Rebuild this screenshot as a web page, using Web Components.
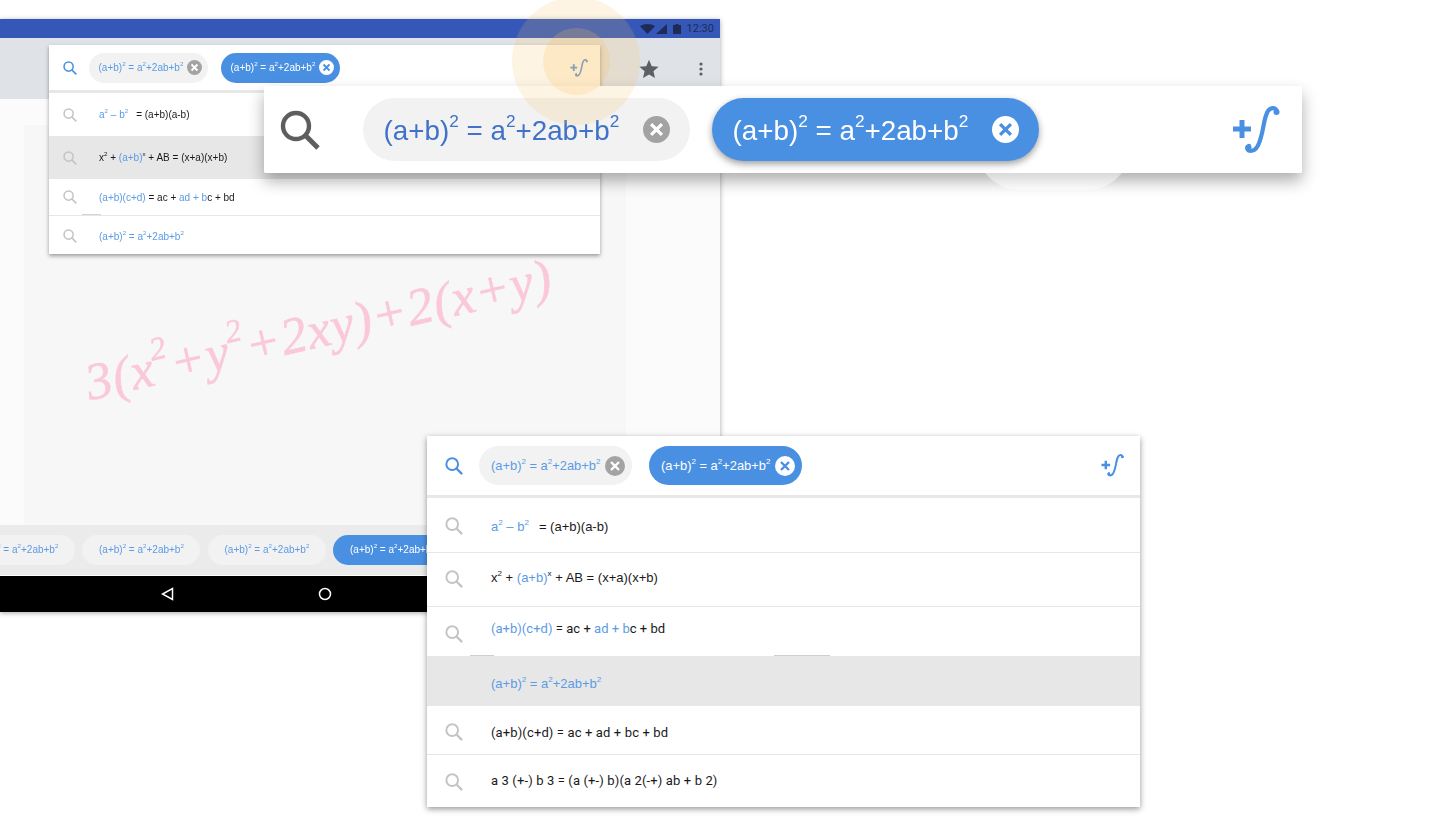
<!DOCTYPE html>
<html lang="en">
<head>
<meta charset="utf-8">
<title>Math search</title>
<style>
    html, body { margin: 0; height: 100%; background: #fff; overflow: hidden; }
    body { font-family: "Liberation Sans", Arial, sans-serif; color: #1a1a1a; }

    sup { font-size: .62em; vertical-align: .76em; line-height: 0; }
    .hl { color: var(--hl, #5b9be6); }
    .roboto { font-family: Roboto, sans-serif; letter-spacing: .13px; }

    /* the three scales of the same search field */
    .size-s {
        --field-h: 45px; --field-pad-l: 14px; --field-pad-r: 12px; --field-gap: 12px; --chip-gap: 13px;
        --icon-size: 14px; --integral-w: 18px; --integral-h: 20px;
        --chip-w: 119px; --chip-h: 30px; --chip-font: 10px; --chip-pad-l: 9.500px; --chip-pad-r: 6px; --clear-size: 15px;
    }
    .size-m {
        --field-h: 59px; --field-pad-l: 18px; --field-pad-r: 16px; --field-gap: 16px; --chip-gap: 17px;
        --icon-size: 18px; --integral-w: 23px; --integral-h: 25px; --chip-text-shift: 1px;
        --chip-w: 153px; --chip-h: 39px; --chip-font: 12.900px; --chip-pad-l: 12px; --chip-pad-r: 7px; --clear-size: 20px;
    }
    .size-l {
        --field-h: 87px; --field-pad-l: 16px; --field-pad-r: 22px; --field-gap: 43px; --chip-gap: 22px;
        --icon-size: 40px; --integral-w: 48px; --integral-h: 50px; --chip-text-shift: 1px;
        --chip-w: 327px; --chip-h: 63px; --chip-font: 27.800px; --chip-pad-l: 20.500px; --chip-pad-r: 20px; --clear-size: 27px;
        --chip-ink: #3f72c8; --search-ink: #5e5e5e; --chip-shadow: 0 3px 7px rgba(0,0,0,.38);
    }
</style>
</head>
<body>

<desktop-canvas>

    <tablet-screen>
        <math-chip slot="tray" plain>(a+b)<sup>2</sup> = a<sup>2</sup>+2ab+b<sup>2</sup></math-chip>
        <math-chip slot="tray" plain>(a+b)<sup>2</sup> = a<sup>2</sup>+2ab+b<sup>2</sup></math-chip>
        <math-chip slot="tray" plain>(a+b)<sup>2</sup> = a<sup>2</sup>+2ab+b<sup>2</sup></math-chip>
        <math-chip slot="tray" plain selected>(a+b)<sup>2</sup> = a<sup>2</sup>+2ab+b<sup>2</sup></math-chip>

        <search-card slot="overlay" class="size-s" style="--card-w: 551px; --row-pad: 14px; --row-gap: 22px; --row-font: 10px; --card-shadow: 0 2px 4px rgba(0,0,0,.38); --divider: 3px">
            <search-field>
                <math-chip>(a+b)<sup>2</sup> = a<sup>2</sup>+2ab+b<sup>2</sup></math-chip>
                <math-chip selected>(a+b)<sup>2</sup> = a<sup>2</sup>+2ab+b<sup>2</sup></math-chip>
            </search-field>
            <suggest-row style="--row-h: 43px"><span class="hl">a<sup>2</sup> – b<sup>2</sup></span><span style="margin-left: 8px">= (a+b)(a-b)</span></suggest-row>
            <suggest-row active style="--row-h: 43px">x<sup>2</sup> + <span class="hl">(a+b)</span><sup>x</sup> + AB = (x+a)(x+b)</suggest-row>
            <suggest-row style="--row-h: 37px; --row-line: 1px; --row-bg: linear-gradient(#d4d4d4, #d4d4d4) 33px 100% / 19px 1px no-repeat #fff">
                <span class="hl">(a+b)(c+d)</span> = ac + <span class="hl">ad + b</span>c + bd
            </suggest-row>
            <suggest-row style="--row-h: 38px; --text-shift: 1px; --icon-shift: 1px"><span class="hl">(a+b)<sup>2</sup> = a<sup>2</sup>+2ab+b<sup>2</sup></span></suggest-row>
        </search-card>

        <ink-note slot="overlay">3(x<sup>2</sup>+y<sup>2</sup>+2xy)+2(x+y)</ink-note>
    </tablet-screen>

    <hero-bar class="size-l" style="--hl: #3f72c8">
        <math-chip>(a+b)<sup>2</sup> = a<sup>2</sup>+2ab+b<sup>2</sup></math-chip>
        <math-chip selected>(a+b)<sup>2</sup> = a<sup>2</sup>+2ab+b<sup>2</sup></math-chip>
    </hero-bar>

    <glow-spot></glow-spot>

    <search-card class="size-m" id="results" style="--card-w: 713px; --row-pad: 18px; --row-gap: 28px; --row-font: 13px; --card-shadow: 0 2px 6px rgba(0,0,0,.42); --divider: 3px">
        <search-field>
            <math-chip>(a+b)<sup>2</sup> = a<sup>2</sup>+2ab+b<sup>2</sup></math-chip>
            <math-chip selected>(a+b)<sup>2</sup> = a<sup>2</sup>+2ab+b<sup>2</sup></math-chip>
        </search-field>
        <suggest-row style="--row-h: 55px; --row-line: 1px; --text-shift: 1px; --icon-shift: 1px"><span class="hl">a<sup>2</sup> – b<sup>2</sup></span><span style="margin-left: 10px">= (a+b)(a-b)</span></suggest-row>
        <suggest-row style="--row-h: 54px; --row-line: 1px; --text-shift: -2px; --icon-shift: -1px">x<sup>2</sup> + <span class="hl">(a+b)</span><sup>x</sup> + AB = (x+a)(x+b)</suggest-row>
        <suggest-row class="roboto" style="--row-h: 49px; --text-shift: -3px; --icon-shift: 2px; letter-spacing: .03px; --row-bg: linear-gradient(#cfcfcf, #cfcfcf) 43px 100% / 24px 1px no-repeat, linear-gradient(#cfcfcf, #cfcfcf) 347px 100% / 56px 1px no-repeat, #fff"><span class="hl">(a+b)(c+d)</span> = ac + <span class="hl">ad + b</span>c + bd</suggest-row>
        <suggest-row active no-icon style="--row-h: 50px; --text-shift: 2px"><span class="hl">(a+b)<sup>2</sup> = a<sup>2</sup>+2ab+b<sup>2</sup></span></suggest-row>
        <suggest-row class="roboto" style="--row-h: 49px; --row-line: 1px; --text-shift: 2px; --icon-shift: 2px">(a+b)(c+d) = ac + ad + bc + bd</suggest-row>
        <suggest-row class="roboto" style="--row-h: 52px; --text-shift: -1px; --icon-shift: 1px">a 3 (+-) b 3 = (a (+-) b)(a 2(-+) ab + b 2)</suggest-row>
    </search-card>

</desktop-canvas>

<script>
    function register(name, css, html) {
        customElements.define(name, class extends HTMLElement {
            constructor() {
                super();
                this.attachShadow({ mode: 'open' });
                this.shadowRoot.innerHTML = `<style>${css}</style>${html}`;
            }
        });
    }

    register('search-icon', `
        :host { display: block; width: var(--icon-size, 18px); height: var(--icon-size, 18px); color: var(--search-ink, #c4c4c4); }
        svg { display: block; width: 100%; height: 100%; }
    `, `<svg viewBox="0 0 40 40" fill="none" stroke="currentColor">
            <circle cx="16" cy="16" r="13" stroke-width="4.4"/>
            <path d="M25 25 L38 38" stroke-width="5"/>
        </svg>`);

    register('integral-icon', `
        :host { display: block; width: var(--integral-w); height: var(--integral-h); color: #4a90e2; }
        svg { display: block; width: 100%; height: 100%; }
    `, `<svg viewBox="0 0 48 50" fill="none" stroke="currentColor" stroke-linecap="round">
            <path d="M1 24 H19 M10 15 V33" stroke-width="5" stroke-linecap="butt"/>
            <path d="M45 7 C44 2 39 2 36 6 C32 12 32 22 29 32 C27 40 24 46 19 46 C15 46 14 42 17 41" stroke-width="4.200"/>
            <circle cx="44.500" cy="7" r="3" fill="currentColor" stroke="none"/>
            <circle cx="16.500" cy="42.500" r="3" fill="currentColor" stroke="none"/>
        </svg>`);

    register('clear-icon', `
        :host { display: block; flex: none; width: var(--clear-size); height: var(--clear-size); }
        svg { display: block; width: 100%; height: 100%; }
        circle { fill: var(--clear-bg, #a3a3a3); }
        path { stroke: var(--clear-x, #fff); fill: none; stroke-width: 2.400; }
    `, `<svg viewBox="0 0 20 20"><circle cx="10" cy="10" r="10"/><path d="M6 6 L14 14 M14 6 L6 14"/></svg>`);

    register('math-chip', `
        :host {
            display: inline-flex; flex: none; align-items: center; justify-content: space-between;
            box-sizing: border-box;
            width: var(--chip-w); height: var(--chip-h);
            padding: 0 var(--chip-pad-r) 0 var(--chip-pad-l);
            border-radius: calc(var(--chip-h) / 2);
            background: #f2f2f2;
            color: var(--chip-ink, #5b9be6);
            font: var(--chip-font)/1 "Liberation Sans", Arial, sans-serif;
            white-space: nowrap;
        }
        :host([selected]) {
            background: #4a90e2; color: #fff;
            --clear-bg: #fff; --clear-x: #4a90e2;
            box-shadow: var(--chip-shadow, none);
        }
        :host([plain]) clear-icon { display: none; }
        span { transform: translateY(var(--chip-text-shift, 0)); }
    `, `<span><slot></slot></span><clear-icon></clear-icon>`);

    register('search-field', `
        :host {
            display: flex; align-items: center; box-sizing: border-box;
            height: var(--field-h);
            padding: 0 var(--field-pad-r) 0 var(--field-pad-l);
            background: #fff;
            --search-ink: var(--field-ink, #4a90e2);
        }
        search-icon { margin-right: var(--field-gap); }
        .chips { display: flex; gap: var(--chip-gap); flex: 1; }
    `, `<search-icon></search-icon><div class="chips"><slot></slot></div><integral-icon></integral-icon>`);

    register('suggest-row', `
        :host {
            display: flex; align-items: center; box-sizing: border-box;
            height: var(--row-h);
            padding-left: var(--row-pad);
            background: var(--row-bg, #fff);
            border-bottom: var(--row-line, 0) solid #e6e6e6;
            font-size: var(--row-font); color: #1a1a1a; white-space: nowrap;
        }
        :host([active]) { background: #e7e7e7; }
        :host([no-icon]) search-icon { visibility: hidden; }
        search-icon { margin-right: var(--row-gap); transform: translateY(var(--icon-shift, 0)); }
        span { transform: translateY(var(--text-shift, 0)); }
    `, `<search-icon></search-icon><span><slot></slot></span>`);

    register('search-card', `
        :host {
            display: block; width: var(--card-w); background: #fff;
            box-shadow: var(--card-shadow);
        }
        ::slotted(search-field) { box-sizing: content-box; border-bottom: var(--divider) solid #e8e8e8; }
    `, `<slot></slot>`);

    register('hero-bar', `
        :host { position: absolute; left: 264px; top: 86px; width: 1038px; height: 87px; display: block; --field-ink: #5e5e5e; }
        .shadow { position: absolute; inset: 0; border-radius: 2px; box-shadow: 0 8px 16px rgba(0,0,0,.32); }
        .blob {
            position: absolute; left: 712px; top: 60px; width: 155px; height: 44px;
            border-radius: 0 0 70px 70px; background: rgba(255,255,255,.45);
        }
        .bar { position: relative; border-radius: 2px; background: #fff; overflow: hidden; }
    `, `<div class="shadow"></div><div class="blob"></div><div class="bar"><search-field><slot></slot></search-field></div>`);

    register('glow-spot', `
        :host {
            position: absolute; left: 512px; top: -3px; width: 128px; height: 128px;
            display: flex; align-items: center; justify-content: center;
            border-radius: 50%; background: rgba(247,188,95,.17); pointer-events: none;
        }
        div { width: 67px; height: 67px; border-radius: 50%; background: rgba(250,190,90,.22); }
    `, `<div></div>`);

    register('ink-note', `
        :host {
            position: absolute; left: 92px; top: 338px; display: block;
            transform: rotate(-13deg); transform-origin: left bottom;
            font: italic 52px/1 "Liberation Serif", serif;
            color: #fac8da; white-space: nowrap; letter-spacing: 1px;
            -webkit-text-stroke: .5px #fac8da;
        }
    `, `<slot></slot>`);

    register('tablet-screen', `
        :host {
            position: absolute; left: 0; top: 19px; width: 720px; height: 593px;
            display: flex; flex-direction: column; overflow: visible;
            background: #fbfbfb;
            box-shadow: 0 1px 5px rgba(0,0,0,.35);
            filter: blur(.4px);
        }
        .status {
            flex: none; height: 19px; background: #3558b8;
            display: flex; align-items: center; justify-content: flex-end;
            padding-right: 6px; box-sizing: border-box;
            color: #1d2b55; font: 11px/1 Roboto, sans-serif;
        }
        .status svg { display: block; }
        .status .signal { margin: 0 6px 0 1px; }
        .status .time { margin-left: 6px; }
        .appbar {
            flex: none; height: 61px; background: #dfe2e6;
            display: flex; align-items: center; justify-content: flex-end;
            padding-top: 1px; box-sizing: border-box;
        }
        .star { margin-right: 40px; }
        .more { margin-right: 17px; }
        .content {
            flex: 1; position: relative; box-sizing: border-box;
            padding: 26px 94px 0 24px; background: #fbfbfb;
        }
        .sheet { height: 100%; background: #f7f7f7; }
        .tray {
            flex: none; height: 50px; background: #ebebeb; overflow: hidden;
            display: flex; align-items: center;
            border-bottom: 1px solid #fff; box-sizing: content-box;
            --chip-w: 118px; --chip-h: 30px; --chip-font: 10px; --chip-pad-l: 17px; --chip-pad-r: 5px;
        }
        .tray-in { display: flex; gap: 7.500px; margin-left: -43.500px; }
        .nav { flex: none; height: 36px; background: #000; display: flex; align-items: center; }
        .nav svg { display: block; flex: none; }
        .overlay { position: absolute; inset: 0; }
        .overlay ::slotted(search-card) { position: absolute; left: 49px; top: 26px; z-index: 2; }
    `, `
        <div class="status">
            <svg width="15" height="10" viewBox="0 0 15 10" fill="currentColor"><path d="M0 2.300 C4 -0.700 11 -0.700 15 2.300 L7.500 10 Z"/></svg>
            <svg class="signal" width="11" height="10" viewBox="0 0 11 10" fill="currentColor"><path d="M11 0 V10 H0 Z"/></svg>
            <svg width="8" height="10" viewBox="0 0 8 10" fill="currentColor"><path d="M2.500 0 H5.500 V1 H8 V10 H0 V1 H2.500 Z"/></svg>
            <span class="time">12:30</span>
        </div>
        <div class="appbar">
            <svg class="star" width="20" height="20" viewBox="0 0 24 24" fill="#5c5f63"><path d="M12 1 L15.300 8.600 L23.500 9.300 L17.300 14.700 L19.200 22.800 L12 18.500 L4.800 22.800 L6.700 14.700 L0.500 9.300 L8.700 8.600 Z"/></svg>
            <svg class="more" width="4" height="14" viewBox="0 0 4 14" fill="#5c5f63"><circle cx="2" cy="2" r="1.600"/><circle cx="2" cy="7" r="1.600"/><circle cx="2" cy="12" r="1.600"/></svg>
        </div>
        <div class="content"><div class="sheet"></div></div>
        <div class="tray"><div class="tray-in"><slot name="tray"></slot></div></div>
        <div class="nav">
            <svg style="margin-left: 161px" width="13" height="14" viewBox="0 0 13 14" fill="none" stroke="#fff" stroke-width="1.500"><path d="M11.500 1.500 V12.500 L1.500 7 Z"/></svg>
            <svg style="margin-left: 144px" width="14" height="14" viewBox="0 0 14 14" fill="none" stroke="#fff" stroke-width="1.500"><circle cx="7" cy="7" r="5.500"/></svg>
        </div>
        <div class="overlay"><slot name="overlay"></slot></div>
    `);

    register('desktop-canvas', `
        :host { display: block; position: relative; width: 1440px; height: 826px; overflow: hidden; background: #fff; }
        ::slotted(#results) { position: absolute; left: 427px; top: 436px; }
    `, `<slot></slot>`);
</script>
</body>
</html>
